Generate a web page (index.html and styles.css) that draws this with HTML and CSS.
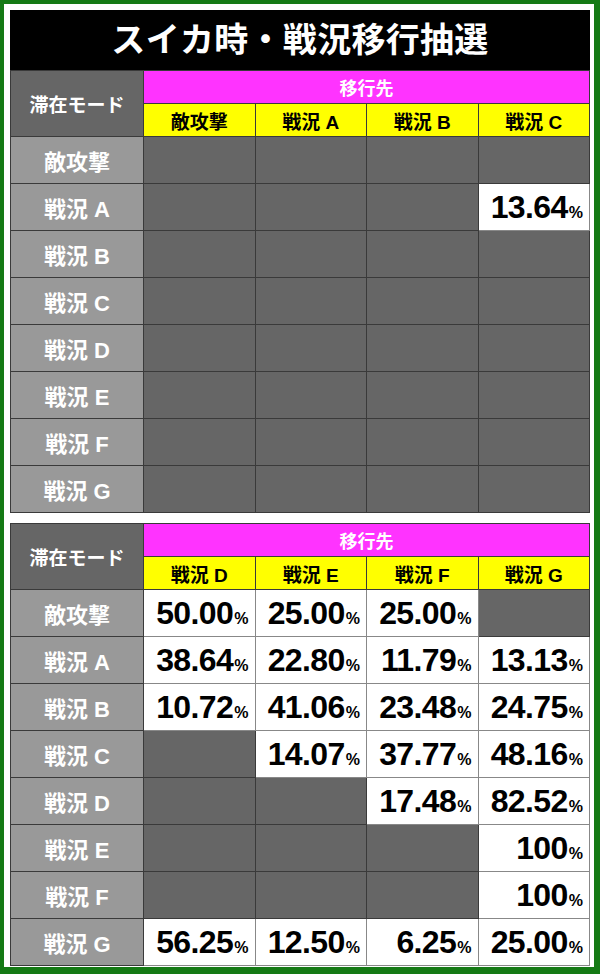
FILE: index.html
```html
<!DOCTYPE html>
<html lang="ja">
<head>
    <meta charset="UTF-8">
    <meta name="viewport" content="width=device-width, initial-scale=1.0">
    <title>スイカ時・戦況移行抽選</title>
    <link rel="stylesheet" href="styles.css">
</head>
<body><div class="frame">
    <h1 class="title">スイカ時・戦況移行抽選</h1>

    <table class="chart">
        <colgroup><col class="c-label"><col><col><col><col></colgroup>
        <tr class="head-top">
            <th rowspan="2" class="mode">滞在モード</th>
            <th colspan="4" class="dest">移行先</th>
        </tr>
        <tr class="head-sub">
            <th class="col">敵攻撃</th>
            <th class="col">戦況 A</th>
            <th class="col">戦況 B</th>
            <th class="col">戦況 C</th>
        </tr>
        <tr><th class="row">敵攻撃</th><td></td><td></td><td></td><td></td></tr>
        <tr><th class="row">戦況 A</th><td></td><td></td><td></td><td class="val">13.64<small>%</small></td></tr>
        <tr><th class="row">戦況 B</th><td></td><td></td><td></td><td></td></tr>
        <tr><th class="row">戦況 C</th><td></td><td></td><td></td><td></td></tr>
        <tr><th class="row">戦況 D</th><td></td><td></td><td></td><td></td></tr>
        <tr><th class="row">戦況 E</th><td></td><td></td><td></td><td></td></tr>
        <tr><th class="row">戦況 F</th><td></td><td></td><td></td><td></td></tr>
        <tr><th class="row">戦況 G</th><td></td><td></td><td></td><td></td></tr>
    </table>

    <table class="chart second">
        <colgroup><col class="c-label"><col><col><col><col></colgroup>
        <tr class="head-top">
            <th rowspan="2" class="mode">滞在モード</th>
            <th colspan="4" class="dest">移行先</th>
        </tr>
        <tr class="head-sub">
            <th class="col">戦況 D</th>
            <th class="col">戦況 E</th>
            <th class="col">戦況 F</th>
            <th class="col">戦況 G</th>
        </tr>
        <tr><th class="row">敵攻撃</th><td class="val">50.00<small>%</small></td><td class="val">25.00<small>%</small></td><td class="val">25.00<small>%</small></td><td></td></tr>
        <tr><th class="row">戦況 A</th><td class="val">38.64<small>%</small></td><td class="val">22.80<small>%</small></td><td class="val">11.79<small>%</small></td><td class="val">13.13<small>%</small></td></tr>
        <tr><th class="row">戦況 B</th><td class="val">10.72<small>%</small></td><td class="val">41.06<small>%</small></td><td class="val">23.48<small>%</small></td><td class="val">24.75<small>%</small></td></tr>
        <tr><th class="row">戦況 C</th><td></td><td class="val">14.07<small>%</small></td><td class="val">37.77<small>%</small></td><td class="val">48.16<small>%</small></td></tr>
        <tr><th class="row">戦況 D</th><td></td><td></td><td class="val">17.48<small>%</small></td><td class="val">82.52<small>%</small></td></tr>
        <tr><th class="row">戦況 E</th><td></td><td></td><td></td><td class="val">100<small>%</small></td></tr>
        <tr><th class="row">戦況 F</th><td></td><td></td><td></td><td class="val">100<small>%</small></td></tr>
        <tr><th class="row">戦況 G</th><td class="val">56.25<small>%</small></td><td class="val">12.50<small>%</small></td><td class="val">6.25<small>%</small></td><td class="val">25.00<small>%</small></td></tr>
    </table>
</div></body>
</html>
```

FILE: styles.css
```css
* {
    margin: 0;
    padding: 0;
    box-sizing: border-box;
}
body {
    background: #ffffff;
    font-family: "Liberation Sans", "Noto Sans CJK JP", sans-serif;
}
.frame {
    width: 600px;
    height: 974px;
    border-style: solid;
    border-color: #157a15;
    border-width: 4px 6px 7px 4px;
    padding: 6px 4px 4px 6px;
    background: #ffffff;
}
.title {
    height: 60px;
    background: #000000;
    color: #ffffff;
    font-size: 34px;
    font-weight: 700;
    text-align: center;
    line-height: 60px;
    letter-spacing: 0.3px;
}
.chart {
    width: 580px;
    border-collapse: collapse;
    table-layout: fixed;
}
.chart.second { margin-top: 10px; }
.c-label { width: 133px; }
.chart th, .chart td {
    border: 1px solid #3a3a3a;
    padding: 0;
}
.chart tr { height: 47px; }
.chart .head-top, .chart .head-sub { height: 33px; }
.mode {
    background: #666666;
    color: #ffffff;
    font-size: 19px;
    font-weight: 700;
}
.dest {
    background: #ff33ff;
    color: #ffffff;
    font-size: 18px;
    font-weight: 700;
}
.col {
    background: #ffff00;
    color: #000000;
    font-size: 19px;
    font-weight: 700;
}
.row {
    background: #999999;
    color: #ffffff;
    font-size: 22px;
    font-weight: 700;
}
.chart td { background: #666666; }
.chart td.val {
    background: #ffffff;
    color: #000000;
    border-color: #888888;
    text-align: right;
    padding-right: 6px;
    font-size: 32px;
    font-weight: 700;
    letter-spacing: -0.6px;
    white-space: nowrap;
}
.val small {
    font-size: 16px;
    letter-spacing: 0;
    margin-left: 1px;
}
```
